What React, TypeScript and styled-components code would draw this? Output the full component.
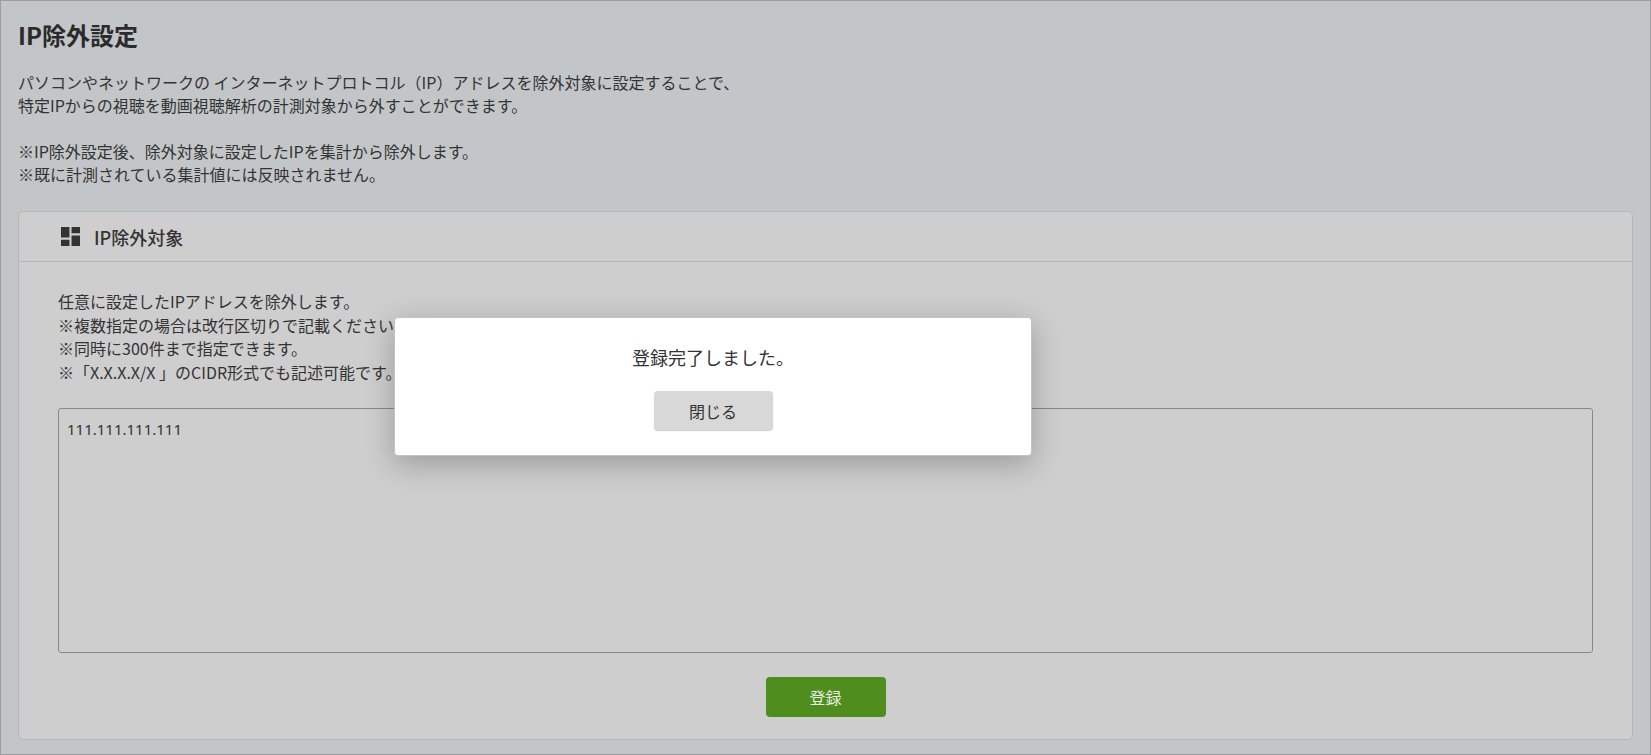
import React from "react";
import styled, { createGlobalStyle } from "styled-components";

const Global = createGlobalStyle`
  html, body { margin: 0; padding: 0; }
  body { font-family: "Noto Sans CJK JP", "Noto Sans", sans-serif; color: #333; background: #c3c6c9; }
`;

const Page = styled.div`
  position: relative;
  box-sizing: border-box;
  width: 1651px;
  height: 755px;
  border: 1px solid #9a9da0;
  background: #c3c6c9;
  padding: 12px 17px 0 17px;
`;

const Title = styled.h1`
  margin: 0;
  font-size: 24px;
  font-weight: 700;
  line-height: 44px;
  color: #2b2b2b;
`;

const Lead = styled.p`
  margin: 14px 0 0;
  font-size: 16px;
  line-height: 23px;
`;

const Panel = styled.section`
  margin-top: 25px;
  background: #cecece;
  border: 1px solid #b3b6ba;
  border-radius: 5px;
  height: 529px;
  box-sizing: border-box;
`;

const PanelHead = styled.div`
  display: flex;
  align-items: center;
  gap: 14px;
  height: 49px;
  padding-left: 42px;
  border-bottom: 1px solid #b5b5b5;
  font-size: 18px;
  font-weight: 500;
`;

const PanelBody = styled.div`
  padding: 28px 39px 0 39px;
`;

const Notes = styled.p`
  margin: 0;
  font-size: 16px;
  line-height: 23.5px;
`;

const Area = styled.div`
  margin-top: 24px;
  height: 245px;
  border: 1px solid #888;
  border-radius: 3px;
  padding: 10px 8px;
  box-sizing: border-box;
  font-size: 15px;
  font-family: "Noto Sans", sans-serif;
`;

const Center = styled.div`
  display: flex;
  justify-content: center;
  margin-top: 24px;
`;

const Submit = styled.button`
  width: 120px;
  height: 40px;
  border: none;
  border-radius: 4px;
  background: #4f8d1f;
  color: #e6efe0;
  font-family: inherit;
  font-size: 16px;
`;

const Modal = styled.div`
  position: absolute;
  left: 393px;
  top: 316px;
  width: 638px;
  height: 139px;
  box-sizing: border-box;
  background: #fff;
  border: 1px solid #c0c4c8;
  border-radius: 4px;
  box-shadow: 0 8px 30px rgba(0,0,0,0.25);
  display: flex;
  flex-direction: column;
  align-items: center;
  padding-top: 25px;
`;

const Message = styled.div`
  font-size: 18px;
  line-height: 28px;
  color: #333;
`;

const Close = styled.button`
  margin-top: 20px;
  width: 119px;
  height: 39px;
  border: none;
  border-radius: 4px;
  background: #d8d8d8;
  box-shadow: 0 1px 1px rgba(0,0,0,0.2);
  font-family: inherit;
  font-size: 16px;
  color: #333;
`;

const DashIcon = () => (
  <svg width="19" height="19" viewBox="0 0 18 18">
    <path fill="#333" d="M0 0h8v10H0zM10 0h8v6h-8zM10 8h8v10h-8zM0 12h8v6H0z" />
  </svg>
);

export default function App() {
  return (
    <>
      <Global />
      <Page>
        <Title>IP除外設定</Title>
        <Lead>
          パソコンやネットワークの インターネットプロトコル（IP）アドレスを除外対象に設定することで、<br />
          特定IPからの視聴を動画視聴解析の計測対象から外すことができます。<br />
          <br />
          ※IP除外設定後、除外対象に設定したIPを集計から除外します。<br />
          ※既に計測されている集計値には反映されません。
        </Lead>
        <Panel>
          <PanelHead>
            <DashIcon />
            IP除外対象
          </PanelHead>
          <PanelBody>
            <Notes>
              任意に設定したIPアドレスを除外します。<br />
              ※複数指定の場合は改行区切りで記載ください。<br />
              ※同時に300件まで指定できます。<br />
              ※「X.X.X.X/X 」のCIDR形式でも記述可能です。
            </Notes>
            <Area>111.111.111.111</Area>
            <Center>
              <Submit>登録</Submit>
            </Center>
          </PanelBody>
        </Panel>
        <Modal>
          <Message>登録完了しました。</Message>
          <Close>閉じる</Close>
        </Modal>
      </Page>
    </>
  );
}
